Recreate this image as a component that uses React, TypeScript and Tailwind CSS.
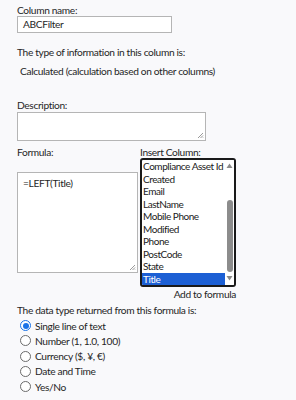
import React from "react";

const items = [
  "Compliance Asset Id",
  "Created",
  "Email",
  "LastName",
  "Mobile Phone",
  "Modified",
  "Phone",
  "PostCode",
  "State",
  "Title",
];

const radios = [
  "Single line of text",
  "Number (1, 1.0, 100)",
  "Currency ($, ¥, €)",
  "Date and Time",
  "Yes/No",
];

function Grip() {
  return (
    <svg width="7" height="7" viewBox="0 0 7 7" className="absolute right-[1px] bottom-[1px]">
      <path d="M6 1 L1 6 M6 3.5 L3.5 6 M6 5.5 L5.5 6" stroke="#9a9a9a" strokeWidth="1" />
    </svg>
  );
}

export default function App() {
  return (
    <div
      className="w-[296px] h-[400px] bg-[#f9f9fb] text-[#262626] overflow-hidden"
      style={{ fontFamily: 'Lato, "Noto Sans", sans-serif' }}
    >
      <div className="pl-[17px] pt-[5px] text-[10.2px] tracking-[-0.35px]">
        <div className="leading-[11px] h-[11px]">Column name:</div>
        <div className="w-[155px] h-[17px] bg-white border border-[#b5b5b5] pl-[5px] leading-[15px]">
          ABCFilter
        </div>
        <div className="mt-[13px] leading-[12px] h-[12px]">The type of information in this column is:</div>
        <div className="mt-[7px] pl-[3px] leading-[12px] h-[12px]">
          Calculated (calculation based on other columns)
        </div>
        <div className="mt-[22px] leading-[12px] h-[12px]">Description:</div>
        <div className="relative mt-[1px] w-[189px] h-[29px] bg-white border border-[#b5b5b5]">
          <Grip />
        </div>
        <div className="flex mt-[5px]">
          <div className="w-[123px]">
            <div className="leading-[12px] h-[12px]">Formula:</div>
            <div className="relative mt-[14px] w-[121px] h-[101px] bg-white border border-[#b5b5b5] pl-[5px] pt-[4px] leading-[13px]">
              =LEFT(Title)
              <Grip />
            </div>
          </div>
          <div className="flex flex-col">
            <div className="leading-[12px] h-[12px]">Insert Column:</div>
            <div className="w-[96px] h-[129px] bg-white border-[2px] border-[#1a1a1a] rounded-[3px] flex overflow-hidden">
              <div className="flex-1 flex flex-col text-[10px] tracking-[-0.45px] leading-[12.5px] text-[#1a1a1a] overflow-hidden">
                {items.map((it) => (
                  <div
                    key={it}
                    className={
                      it === "Title"
                        ? "pl-[1px] h-[12.5px] shrink-0 bg-[#1c5fd4] text-white whitespace-nowrap"
                        : "pl-[1px] h-[12.5px] shrink-0 whitespace-nowrap"
                    }
                  >
                    {it}
                  </div>
                ))}
              </div>
              <div className="w-[9px] shrink-0 flex flex-col items-center bg-white">
                <svg width="7" height="6" viewBox="0 0 7 6" className="mt-[3px]">
                  <path d="M3.5 0.5 L6.5 5 L0.5 5 Z" fill="#8a8a8a" />
                </svg>
                <div className="mt-[31px] w-[6px] h-[72px] rounded-[3px] bg-[#8c8c8c]" />
                <svg width="7" height="6" viewBox="0 0 7 6" className="mt-[3px]">
                  <path d="M0.5 1 L6.5 1 L3.5 5.5 Z" fill="#8a8a8a" />
                </svg>
              </div>
            </div>
            <div className="mt-[1px] text-right leading-[12px] h-[12px]">
              Add to formula
            </div>
          </div>
        </div>
        <div className="mt-[4px] leading-[12px] h-[12px]">The data type returned from this formula is:</div>
        <div className="mt-[2px] pl-[3px] flex flex-col">
          {radios.map((r, i) => (
            <div key={r} className="flex items-center h-[15.25px]">
              {i === 0 ? (
                <span className="w-[11px] h-[11px] rounded-full border border-[#1a73e8] bg-white flex items-center justify-center">
                  <span className="w-[6px] h-[6px] rounded-full bg-[#1a73e8]" />
                </span>
              ) : (
                <span className="w-[11px] h-[11px] rounded-full border border-[#6b6b6b] bg-white" />
              )}
              <span className="ml-[4px] leading-[12px]">{r}</span>
            </div>
          ))}
        </div>
      </div>
    </div>
  );
}
